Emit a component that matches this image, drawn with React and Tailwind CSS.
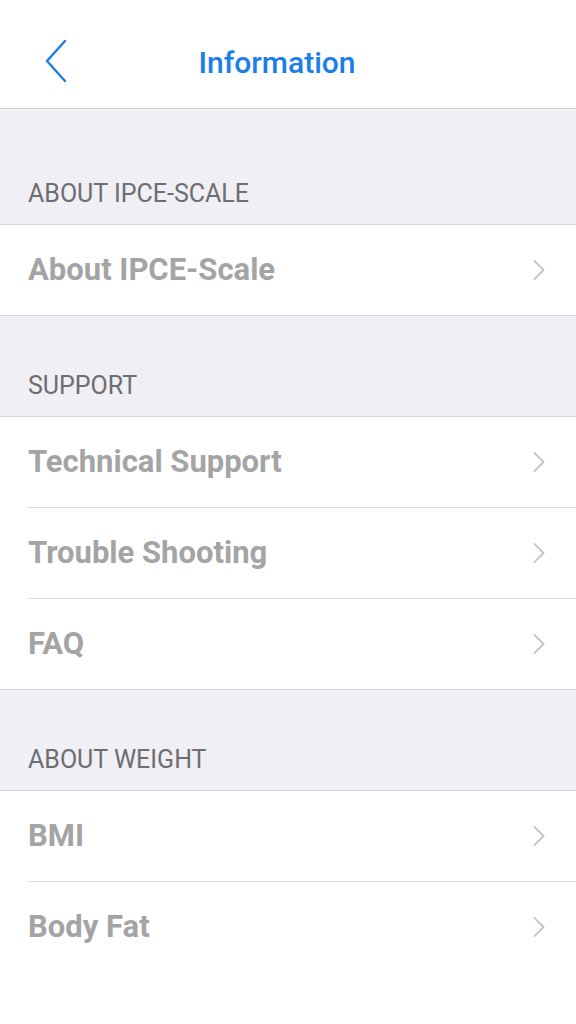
const sections = [
  { title: 'ABOUT IPCE-SCALE', first: true, items: ['About IPCE-Scale'] },
  { title: 'SUPPORT', items: ['Technical Support', 'Trouble Shooting', 'FAQ'] },
  { title: 'ABOUT WEIGHT', last: true, items: ['BMI', 'Body Fat'] },
];

function Chevron({ className }) {
  return (
    <svg viewBox="0 0 14 24" className={className} fill="none" stroke="currentColor" strokeWidth="2" strokeLinecap="round" strokeLinejoin="round">
      <path d="M2 2 L12 12 L2 22" />
    </svg>
  );
}

export default function App() {
  return (
    <div className="min-h-screen w-[576px] bg-white font-['Roboto',sans-serif]">
      {/* nav bar */}
      <div className="relative flex h-[109px] items-center justify-center border-b border-[#d3d3d8] bg-white">
        <svg viewBox="0 0 24 44" className="absolute left-[44px] top-[39px] h-[44px] w-[24px] text-[#1a7ee8]" fill="none" stroke="currentColor" strokeWidth="2.4" strokeLinecap="round" strokeLinejoin="round">
          <path d="M21 2 L3 22 L21 42" />
        </svg>
        <span className="mr-[22px] mt-[16px] text-[30px] font-medium text-[#1a7ee8]">Information</span>
      </div>

      {sections.map((s) => (
        <div key={s.title}>
          <div className={`flex items-end bg-[#efeff4] px-[28px] pb-[18px] ${s.first ? 'h-[115px]' : 'h-[100px]'}`}>
            <span className="text-[25px] leading-[24px] text-[#6d6d72]">{s.title}</span>
          </div>
          <div className={s.last ? 'border-t border-[#d3d3d8]' : 'border-y border-[#d3d3d8]'}>
            {s.items.map((item, i) => (
              <div key={item} className="pl-[28px]">
                <div className={`flex items-center justify-between pr-[30px] ${i > 0 ? 'h-[91px] border-t border-[#dcdce0]' : 'h-[90px]'}`}>
                  <span className="text-[31px] font-bold text-[#a4a4a4]">{item}</span>
                  <Chevron className="h-[22px] w-[14px] text-[#c4c4c8]" />
                </div>
              </div>
            ))}
          </div>
        </div>
      ))}
    </div>
  );
}
